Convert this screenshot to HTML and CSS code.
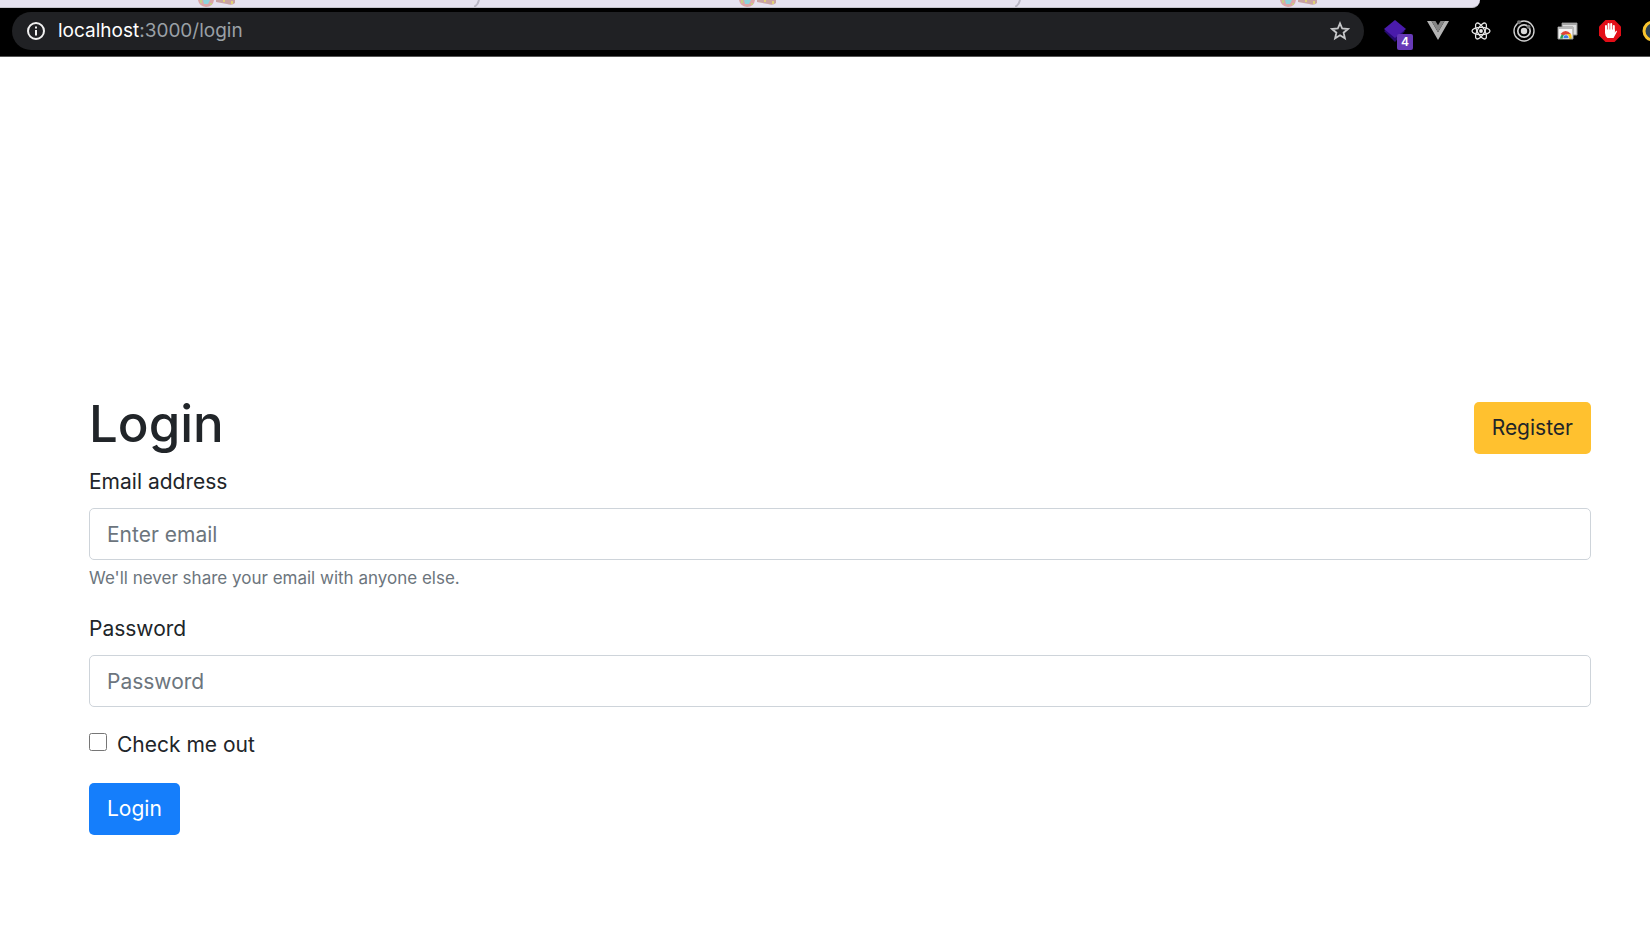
FILE: index.html
```
<!DOCTYPE html>
<html lang="en">
<head>
  <meta charset="UTF-8">
  <title>Login</title>
  <link rel="stylesheet" href="styles.css">
</head>
<body>

  <svg class="symbols" aria-hidden="true">
    <symbol id="tab-icon" viewBox="0 0 38 7">
      <path d="M0 0H16Q15 7 8 7Q1 6 0 0Z" fill="#dca7a8"/>
      <path d="M5 0H12L10 4H6Z" fill="#8ed4dc"/>
      <path d="M2 0H4V3H2ZM12 3H14V5H12Z" fill="#c9cf86"/>
      <path d="M18 0H37V3Q34 6 29 4L18 2Z" fill="#c9a3a3"/>
      <path d="M25 0H27V2H25ZM33 1H35V4H33Z" fill="#e0d277"/>
    </symbol>
    <symbol id="tab-edge" viewBox="0 0 6 7">
      <path d="M5 0Q4 5 0 7" fill="none" stroke="#bab7c4" stroke-width="2"/>
    </symbol>
  </svg>

  <header class="browser">
    <div class="tabs">
      <div class="tab tab-first">
        <svg class="tab-icon"><use href="#tab-icon"/></svg>
        <svg class="tab-edge"><use href="#tab-edge"/></svg>
      </div>
      <div class="tab">
        <svg class="tab-icon"><use href="#tab-icon"/></svg>
        <svg class="tab-edge"><use href="#tab-edge"/></svg>
      </div>
      <div class="tab tab-last">
        <svg class="tab-icon"><use href="#tab-icon"/></svg>
      </div>
    </div>

    <div class="toolbar">
      <div class="address">
        <button type="button" class="icon-button" aria-label="Site information">
          <svg width="20" height="20" viewBox="0 0 20 20">
            <circle cx="10" cy="10" r="8" fill="none" stroke="#f1f1f1" stroke-width="2"/>
            <path d="M9 5.5H11V7.5H9ZM9 9H11V14.5H9Z" fill="#f1f1f1"/>
          </svg>
        </button>
        <span class="url"><span class="host">localhost</span>:3000/login</span>
        <button type="button" class="icon-button" aria-label="Bookmark this page">
          <svg width="20" height="20" viewBox="0 0 20 20">
            <path d="M10 2.3L12.2 7.5L17.9 8L13.6 11.7L14.9 17.3L10 14.3L5.1 17.3L6.4 11.7L2.1 8L7.8 7.5Z" fill="none" stroke="#c6c7c9" stroke-width="1.8"/>
          </svg>
        </button>
      </div>

      <div class="extensions">
        <button type="button" class="icon-button extension" aria-label="Layers">
          <svg width="22" height="22" viewBox="0 0 22 22">
            <path d="M0 11L11 4L21 11L11 22Z" fill="#260a70"/>
            <path d="M0 9L11 0L22 9L11 18Z" fill="#4a1bab"/>
          </svg>
          <span class="badge">4</span>
        </button>
        <button type="button" class="icon-button extension" aria-label="Vue devtools">
          <svg width="22" height="22" viewBox="0 0 22 22">
            <path d="M0 1H4.5L11 12.3L17.5 1H22L11 20Z" fill="#b3b3b3"/>
            <path d="M4.5 1H8.5L11 5.3L13.5 1H17.5L11 12.3Z" fill="#858585"/>
          </svg>
        </button>
        <button type="button" class="icon-button extension" aria-label="React devtools">
          <svg width="22" height="22" viewBox="0 0 22 22">
            <g fill="none" stroke="#e6e6e6" stroke-width="1.3">
              <ellipse cx="11" cy="11" rx="9" ry="3.6"/>
              <ellipse cx="11" cy="11" rx="9" ry="3.6" transform="rotate(60 11 11)"/>
              <ellipse cx="11" cy="11" rx="9" ry="3.6" transform="rotate(120 11 11)"/>
            </g>
            <circle cx="11" cy="11" r="1.9" fill="#e6e6e6"/>
          </svg>
        </button>
        <button type="button" class="icon-button extension" aria-label="Redux devtools">
          <svg width="22" height="22" viewBox="0 0 22 22">
            <g fill="none" stroke="#d0d0d0">
              <circle cx="11" cy="11" r="10" stroke-width="1.4"/>
              <circle cx="11" cy="11" r="6.2" stroke-width="1.7"/>
            </g>
            <circle cx="11" cy="11" r="3.2" fill="#d9d9d9"/>
            <circle cx="6" cy="2.3" r="2" fill="#777"/>
            <circle cx="15.5" cy="6.8" r="2" fill="#777"/>
          </svg>
        </button>
        <button type="button" class="icon-button extension" aria-label="Window capture">
          <svg width="22" height="22" viewBox="0 0 22 22">
            <path d="M6 3H21V15H6Z" fill="#dedede" stroke="#858585"/>
            <path d="M6 3H21V5H6Z" fill="#a5a5a5"/>
            <path d="M2 7H17V19H2Z" fill="#f5f5f5" stroke="#8f8f8f"/>
            <path d="M2 7H17V9H2Z" fill="#b9b9b9"/>
            <path d="M4 18.5A5.8 7 0 0 1 15.5 18.5Z" fill="#2ca150"/>
            <path d="M4.500 14Q9.500 8 15 14L14 15H7Z" fill="#e04535"/>
            <path d="M11 14H15Q16 16 15.5 18.5H11Z" fill="#fbc116"/>
            <path d="M7 18.5A3 3.8 0 0 1 13 18.5Z" fill="#3c7de6" stroke="#fff" stroke-width="0.6"/>
          </svg>
        </button>
        <button type="button" class="icon-button extension" aria-label="Ad blocker">
          <svg width="22" height="22" viewBox="0 0 22 22">
            <path d="M6.5 0H15.5L22 6.5V15.5L15.5 22H6.5L0 15.5V6.5Z" fill="#e20d17"/>
            <path d="M7 11V6M9.6 10V4M12.2 10V4M14.8 11V6" stroke="#fff" stroke-width="2" stroke-linecap="round"/>
            <path d="M6 9.5H15.8V12.8L17 10.8Q18.3 10.3 17.8 12L14.5 18H8.5Q6 16 6 13Z" fill="#fff"/>
          </svg>
        </button>
        <button type="button" class="icon-button extension" aria-label="Cookies">
          <svg width="22" height="22" viewBox="0 0 22 22">
            <circle cx="11" cy="11" r="9" fill="#294054" stroke="#f9c52f" stroke-width="3"/>
          </svg>
        </button>
      </div>
    </div>
  </header>

  <main class="page">
    <div class="page-header">
      <h1>Login</h1>
      <button type="button" class="btn btn-warning">Register</button>
    </div>

    <form id="loginForm">
      <div class="form-group">
        <label for="email">Email address</label>
        <input type="email" class="form-control" id="email" placeholder="Enter email" aria-describedby="emailHelp">
        <small id="emailHelp" class="form-text">We'll never share your email with anyone else.</small>
      </div>
      <div class="form-group">
        <label for="password">Password</label>
        <input type="password" class="form-control" id="password" placeholder="Password">
      </div>
      <div class="form-check">
        <input type="checkbox" id="check">
        <label for="check">Check me out</label>
      </div>
      <button type="submit" class="btn btn-primary">Login</button>
    </form>
  </main>

</body>
</html>
```
FILE: styles.css
```
* {
  box-sizing: border-box;
}
body {
  margin: 0;
  font-family: Inter, "Liberation Sans", sans-serif;
  font-size: 21px;
  line-height: 32px;
  color: #212529;
  background-color: #fff;
}
.symbols {
  display: none;
}

/* browser bar */
.browser {
  overflow: hidden;
  background-color: #000;
  border-bottom: 1px solid #555;
}
.tabs {
  display: grid;
  grid-template-columns: 480fr 541fr 459fr 170fr;
  height: 7px;
}
.tab {
  display: flex;
  justify-content: space-between;
  padding-left: 259px;
  background-color: #e6e3f0;
  border-bottom: 1px solid #c5c4cc;
}
.tab-first {
  padding-left: 198px;
}
.tab-last {
  border-bottom-right-radius: 8px;
}
.tab-icon {
  width: 38px;
  height: 7px;
}
.tab-edge {
  width: 6px;
  height: 7px;
}
.toolbar {
  display: flex;
  align-items: center;
  gap: 20px;
  padding: 5px 0 6px 12px;
}
.address {
  flex: 1;
  display: flex;
  align-items: center;
  gap: 12px;
  height: 38px;
  padding: 0 14px;
  border-radius: 19px;
  background-color: #202124;
}
.url {
  flex: 1;
  font-size: 19px;
  color: #9aa0a6;
}
.host {
  color: #fff;
}
.icon-button {
  display: block;
  padding: 0;
  border: 0;
  background: none;
}
.icon-button svg {
  display: block;
}
.extensions {
  display: flex;
  gap: 21px;
  margin-right: -14px;
}
.extension {
  position: relative;
}
.badge {
  position: absolute;
  left: 13px;
  top: 14px;
  width: 16px;
  height: 16px;
  border-radius: 2px;
  background-color: #673ab7;
  color: #fff;
  font-family: Inter, sans-serif;
  font-size: 12px;
  font-weight: 600;
  line-height: 16px;
  text-align: center;
}

/* login page */
.page {
  padding: 337px 59px 40px 89px;
}
.page-header {
  display: flex;
  justify-content: space-between;
  align-items: flex-end;
  margin-bottom: 12px;
}
h1 {
  margin: 0;
  font-size: 51px;
  font-weight: 500;
  line-height: 60px;
}
label {
  display: block;
}
.form-group {
  margin-bottom: 22px;
}
.form-group label {
  margin-bottom: 10px;
}
.form-control {
  display: block;
  width: 100%;
  height: 52px;
  padding: 0 17px;
  border: 1px solid #ced4da;
  border-radius: 5px;
  background-color: #fff;
  font: inherit;
}
.form-control::placeholder {
  color: #6c757d;
}
.form-text {
  display: block;
  margin-top: 5px;
  font-size: 17px;
  line-height: 26px;
  color: #6c757d;
}
.form-check {
  display: flex;
  gap: 10px;
  margin-bottom: 22px;
}
.form-check input {
  width: 18px;
  height: 18px;
  margin: 4px 0 0;
}
.btn {
  height: 52px;
  padding: 0 18px;
  border: 0;
  border-radius: 5px;
  font: inherit;
}
.btn-warning {
  background-color: #ffc12f;
  color: #212529;
}
.btn-primary {
  background-color: #157efb;
  color: #fff;
}
```
